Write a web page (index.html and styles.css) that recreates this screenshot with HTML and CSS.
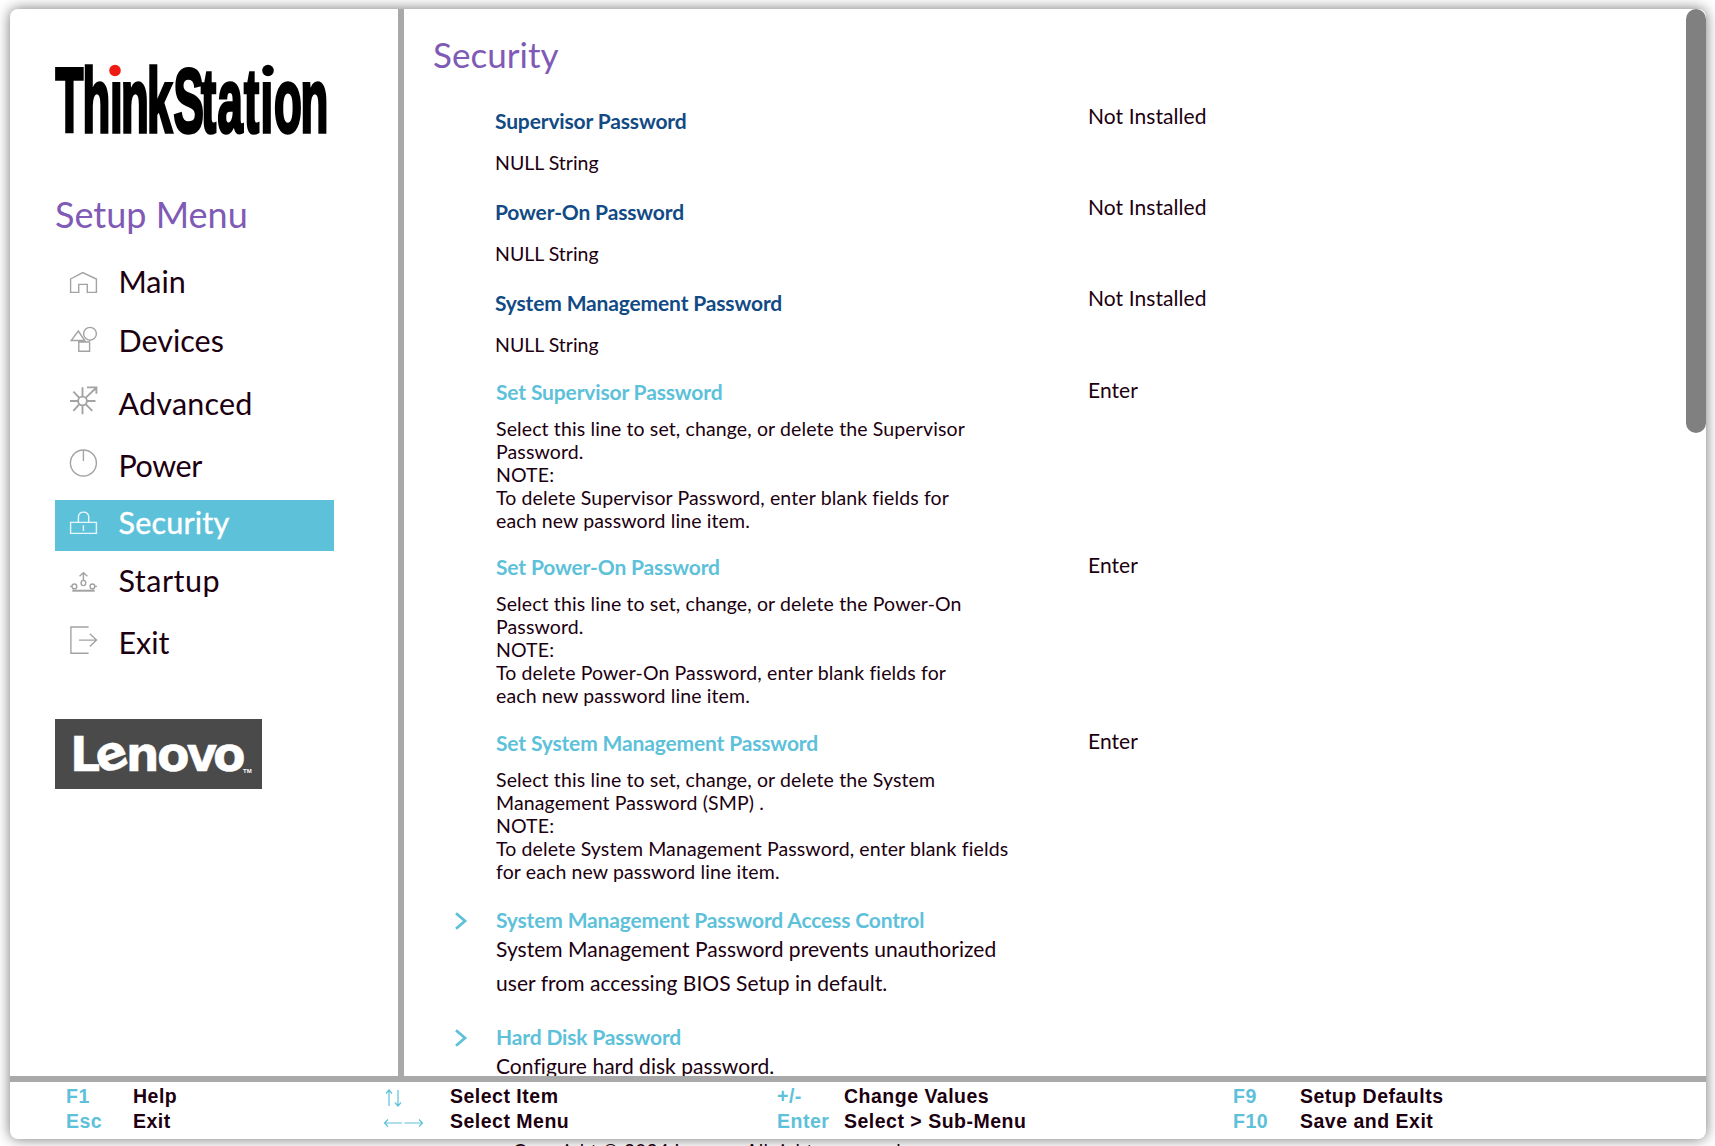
FILE: index.html
```html
<!DOCTYPE html>
<html lang="en">
<head>
<meta charset="utf-8">
<title>ThinkStation Setup - Security</title>
<link rel="stylesheet" href="styles.css">
</head>
<body>
<div class="panel">
  <div class="body">
    <aside class="sidebar">
      <svg class="brand" width="280" height="80" viewBox="0 0 280 80">
        <g transform="scale(.5 1)"><text class="brand-text" y="72" x="1 55 110 132 184 237 292 325 378 411 438 491">ThinkStation</text></g>
        <rect x="53" y="0" width="14" height="19.5" fill="#fff"/><circle cx="60" cy="10.5" r="5.8" fill="#f01a14"/>
        <rect x="206" y="0" width="14" height="19.5" fill="#fff"/><circle cx="213" cy="10.5" r="5.8"/>
      </svg>
      <h2 class="menu-title">Setup Menu</h2>
      <nav class="menu">
        <a class="item main"><svg class="icon" viewBox="0 0 28 28"><path d="M.6 11 12.7 4.6 26.4 11V24.4H17.3V16.4H8.7V24.4H.6Z"/></svg><span>Main</span></a>
        <a class="item devices"><svg class="icon" viewBox="0 0 28 28"><path d="M8.3 4 14.7 13.5H1.2ZM8.8 15H19.6V24.3H8.8Z"/><circle cx="20" cy="6.8" r="6.4"/></svg><span>Devices</span></a>
        <a class="item advanced"><svg class="icon bold" viewBox="0 0 28 28"><circle cx="12.5" cy="11" r="4.4"/><path d="M12.5-2.7V6.6M12.5 15.4V24.3M0 11H8M17 11H25.5M3.4 1.6 9.4 7.9M3.4 20.8 9.4 14.1M22.3 20.8 15.6 14.1M15.6 7.9 26.3-2.3M17-2.6H26.4V3.8"/></svg><span>Advanced</span></a>
        <a class="item power"><svg class="icon" viewBox="0 0 28 28"><circle cx="13.4" cy="11" r="13"/><path d="M13.4-2V9"/></svg><span>Power</span></a>
        <a class="item security active"><svg class="icon" viewBox="0 0 28 28"><path d="M.6 13.4H26.4V24.4H.6ZM8.4 13.4V7.4A5.2 5 0 0 1 18.7 7.4V13.4M13.4 16.3V22"/></svg><span>Security</span></a>
        <a class="item startup"><svg class="icon" viewBox="0 0 28 28"><path d="M13.4 13.5V6M9.5 9.3 13.4 5.8 17.4 9.3M0 19.4H1.8M25 19.4H27"/><ellipse cx="13.4" cy="16" rx="2.3" ry="2.6"/><circle cx="4.4" cy="19.4" r="2.4"/><circle cx="22.4" cy="19.4" r="2.4"/><path class="base" d="M2.3 23.7H24.7"/></svg><span>Startup</span></a>
        <a class="item exit"><svg class="icon" viewBox="0 0 28 28"><path d="M18.6-2H.9V24.3H18.6M9 11.1H26.3M19.8 4.8 26.5 11.1 19.8 17.5"/></svg><span>Exit</span></a>
      </nav>
      <svg class="lenovo" width="207" height="70" viewBox="0 0 207 70">
        <rect width="207" height="70" fill="#4a4a4a"/>
        <text class="lenovo-text" y="51.5 55.5 51.5 51.5 51.5 51.5" x="15 46 70.8 102 131.5 158" rotate="0 -20 0 0 0 0">Lenovo</text>
        <text class="tm" x="188" y="53.5">TM</text>
      </svg>
    </aside>
    <main class="content">
      <h1 class="title">Security</h1>
      <section class="row info"><div class="left"><h3>Supervisor Password</h3><p>NULL String</p></div><div class="value">Not Installed</div></section>
      <section class="row info"><div class="left"><h3>Power-On Password</h3><p>NULL String</p></div><div class="value">Not Installed</div></section>
      <section class="row info"><div class="left"><h3>System Management Password</h3><p>NULL String</p></div><div class="value">Not Installed</div></section>
      <section class="row set"><div class="left"><h3>Set Supervisor Password</h3><p>Select this line to set, change, or delete the Supervisor<br>Password.<br>NOTE:<br>To delete Supervisor Password, enter blank fields for<br>each new password line item.</p></div><div class="value">Enter</div></section>
      <section class="row set"><div class="left"><h3>Set Power-On Password</h3><p>Select this line to set, change, or delete the Power-On<br>Password.<br>NOTE:<br>To delete Power-On Password, enter blank fields for<br>each new password line item.</p></div><div class="value">Enter</div></section>
      <section class="row set last"><div class="left"><h3>Set System Management Password</h3><p>Select this line to set, change, or delete the System<br>Management Password (SMP) .<br>NOTE:<br>To delete System Management Password, enter blank fields<br>for each new password line item.</p></div><div class="value">Enter</div></section>
      <section class="row sub"><svg class="chevron" viewBox="0 0 14 18"><path d="M2 1.2 11 9 2 16.8"/></svg><div class="left"><h3>System Management Password Access Control</h3><p>System Management Password prevents unauthorized<br>user from accessing BIOS Setup in default.</p></div></section>
      <section class="row sub"><svg class="chevron" viewBox="0 0 14 18"><path d="M2 1.2 11 9 2 16.8"/></svg><div class="left"><h3>Hard Disk Password</h3><p>Configure hard disk password.</p></div></section>
      <div class="scrollbar"></div>
    </main>
  </div>
  <footer class="keys">
    <dl class="c1"><dt>F1</dt><dd>Help</dd><dt>Esc</dt><dd>Exit</dd></dl>
    <dl class="c2"><dt><svg class="arrows" viewBox="0 0 42 18"><path d="M6 17V1M3 4.5 6 1 9 4.5M15 1V17M12 13.5 15 17 18 13.5"/></svg></dt><dd>Select Item</dd><dt><svg class="arrows" viewBox="0 0 42 18"><path d="M1.5 9H19M5 5.5 1.5 9 5 12.5M21.5 9H39.5M36 5.5 39.5 9 36 12.5"/></svg></dt><dd>Select Menu</dd></dl>
    <dl class="c3"><dt>+/-</dt><dd>Change Values</dd><dt>Enter</dt><dd>Select &gt; Sub-Menu</dd></dl>
    <dl class="c4"><dt>F9</dt><dd>Setup Defaults</dd><dt>F10</dt><dd>Save and Exit</dd></dl>
  </footer>
</div>
<p class="copyright">Copyright © 2024 Lenovo. All rights reserved.</p>
</body>
</html>
```
FILE: styles.css
```css
* { box-sizing: border-box; margin: 0; padding: 0; }
body { width: 1715px; height: 1146px; overflow: hidden; padding: 9px 9px 0 10px; background: #fff; color: #1c0010; font-family: Lato, sans-serif; }
.panel { position: relative; height: 1130px; border-radius: 8px; background: #fff; box-shadow: 0 0 14px rgba(0, 0, 0, .55); overflow: hidden; display: flex; flex-direction: column; }
.body { display: flex; height: 1067px; }
.sidebar { width: 394px; border-right: 6px solid #a9a9a9; padding-left: 45px; }
.brand { display: block; margin-top: 51px; overflow: visible; }
.brand-text { font: bold 91px "Liberation Sans"; stroke: #000; stroke-width: 3.6; }
.menu-title { margin-top: 54px; height: 41px; font-size: 36px; line-height: 40px; font-weight: 400; letter-spacing: 0; color: #7f5bb5; white-space: nowrap; }
.menu { margin-top: 18px; width: 279px; }
.item { display: flex; align-items: center; padding-left: 15px; font-size: 30.5px; line-height: 40px; }
.item span { padding-bottom: 2px; }
.icon { width: 28px; height: 28px; margin-right: 20.5px; overflow: visible; fill: none; stroke: #a3a3a3; stroke-width: 1.4; }
.icon.bold { stroke-width: 1.9; }
.icon .base { stroke-width: 2; }
.main { height: 58px; }
.devices { height: 60px; }
.advanced { height: 66px; letter-spacing: .2px; }
.power { height: 63px; padding-bottom: 5px; letter-spacing: -.4px; }
.security { height: 51px; padding-bottom: 5px; letter-spacing: .2px; }
.startup { height: 60px; letter-spacing: .5px; }
.exit { height: 64px; }
.active { background: #5dc1da; color: #fff; -webkit-text-stroke: .4px #fff; }
.active .icon { stroke: #e8f7fb; }
.lenovo { display: block; margin-top: 44px; }
.lenovo-text { font: bold 47.5px "DejaVu Sans"; fill: #fff; stroke: #fff; stroke-width: .4; }
.tm { font: bold 6px "Liberation Sans"; fill: #fff; }
.content { position: relative; flex: 1; overflow: hidden; padding-left: 29px; }
.title { margin-top: 25px; height: 69px; line-height: 40px; font-size: 35px; font-weight: 400; letter-spacing: .05px; color: #7f5bb5; }
.row { display: flex; padding-left: 62px; position: relative; font-size: 21px; white-space: nowrap; }
.left { width: 593px; }
.row h3 { font-size: 21px; line-height: 24px; font-weight: 700; letter-spacing: -.15px; color: #5dc1da; }
.value { font-size: 21px; line-height: 25px; letter-spacing: .08px; }
.info { height: 91px; }
.info h3 { margin-top: 6px; color: #124a85; }
.info p { margin-top: 17px; font-size: 19.5px; line-height: 25px; }
.row.set { height: 175px; margin-top: 1px; }
.row.set + .row.set { margin-top: 0; }
.row.set + .row.set.last { margin-top: 1px; }
.set h3, .sub h3, .set p, .sub p { padding-left: 1px; }
.set h3 { margin-top: 3px; }
.set p { margin-top: 13px; font-size: 19.5px; line-height: 23px; letter-spacing: .12px; }
.sub { height: 117px; top: 5px; }
.sub p { line-height: 34px; letter-spacing: .04px; }
.chevron { position: absolute; left: 20.5px; top: 4px; width: 14px; height: 18px; fill: none; stroke: #5dc1da; stroke-width: 2.8; }
.scrollbar { position: absolute; right: 0; top: 0; width: 20px; height: 424px; border-radius: 10px; background: #808080; }
.keys { position: relative; height: 63px; border-top: 6px solid #a9a9a9; padding: 2px 0 0 56px; display: flex; font: bold 19.5px "Liberation Sans", sans-serif; letter-spacing: .5px; }
.keys dl { display: grid; grid-template-columns: 67px 1fr; grid-auto-rows: 25px; line-height: 25px; white-space: nowrap; }
.keys dt { color: #5dc1da; }
.c1 { width: 317px; } .c2 { width: 394px; } .c3 { width: 456px; }
.arrows { display: block; width: 42px; height: 18px; margin-top: 5px; fill: none; stroke: #5dc1da; stroke-width: 1.2; }
.copyright { margin: 0 0 0 503px; font-size: 19px; line-height: 24px; letter-spacing: .27px; white-space: nowrap; }
```
